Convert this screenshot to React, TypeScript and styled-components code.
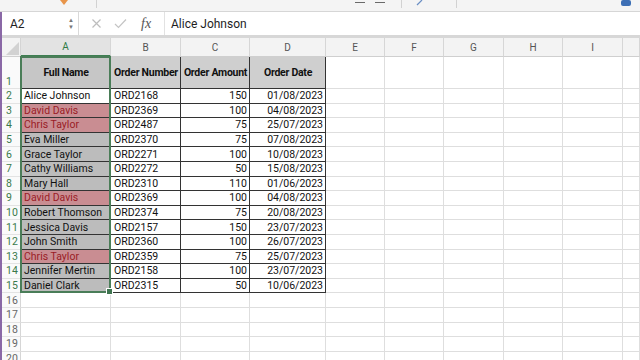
import React from 'react';
import styled, { createGlobalStyle } from 'styled-components';

const GlobalStyle = createGlobalStyle`
  html, body {
    margin: 0;
    padding: 0;
    background: #ffffff;
    overflow: hidden;
  }
  body {
    font-family: Roboto, "Liberation Sans", sans-serif;
  }
`;

const Page = styled.div`
  width: 640px;
  height: 360px;
  overflow: hidden;
  display: flex;
  flex-direction: column;
`;

const Ribbon = styled.div`
  height: 12px;
  flex: none;
  background: #f4f4f4;
  border-bottom: 1px solid #d6d6d6;
  display: flex;
  align-items: flex-start;
  box-sizing: border-box;
  overflow: hidden;
`;

const RibbonGap = styled.div<{ $w: number }>`
  width: ${p => p.$w}px;
  flex: none;
`;

const RibbonSep = styled.div`
  width: 1px;
  height: 8px;
  background: #d2d2d2;
  flex: none;
`;

const Dash = styled.div`
  width: 10px;
  height: 1px;
  margin-top: 2px;
  background: #6a6a6a;
  flex: none;
`;

const Body = styled.div`
  flex: 1;
  display: flex;
  flex-direction: column;
  border-left: 2px solid #8a68a6;
  min-height: 0;
`;

const FormulaBar = styled.div`
  height: 23px;
  flex: none;
  display: flex;
  align-items: center;
  background: #ffffff;
  border-bottom: 3px solid #d7d7d7;
  box-sizing: content-box;
`;

const NameBox = styled.div`
  width: 77px;
  height: 100%;
  box-sizing: border-box;
  display: flex;
  align-items: center;
  justify-content: space-between;
  padding: 0 4px 0 8px;
  border-right: 1px solid #d9d9d9;
  font-size: 12px;
  color: #222;
`;

const Spinner = styled.div`
  display: flex;
  flex-direction: column;
  gap: 1px;
  font-size: 6px;
  line-height: 6px;
  color: #777;
`;

const FxArea = styled.div`
  width: 86px;
  height: 100%;
  display: flex;
  align-items: center;
  gap: 12px;
  padding-left: 12px;
  box-sizing: border-box;
  border-right: 1px solid #e2e2e2;
`;

const FxText = styled.span`
  font-family: "Liberation Serif", serif;
  font-style: italic;
  font-size: 14px;
  color: #555;
  margin-left: 2px;
`;

const FormulaText = styled.div`
  padding-left: 6px;
  font-size: 12px;
  color: #1e1e1e;
`;

const Sheet = styled.div`
  position: relative;
  display: grid;
  grid-template-columns: 19px 90px 70px 69px 76px 59px 59px 60px 59px 60px 1fr;
  grid-template-rows: 19px 32px repeat(19, 14.6px);
  background: #fff;
`;

const Corner = styled.div`
  background: #f3f3f3;
  border-right: 1px solid #d4d4d4;
  border-bottom: 1px solid #cfcfcf;
  box-sizing: border-box;
  overflow: hidden;
`;

const ColHead = styled.div<{ $active?: boolean }>`
  box-sizing: border-box;
  display: flex;
  align-items: center;
  justify-content: center;
  font-size: 10px;
  color: ${p => (p.$active ? '#2f7a45' : '#555')};
  background: ${p => (p.$active ? '#e3e3e3' : '#f3f3f3')};
  border-right: 1px solid #d6d6d6;
  border-bottom: ${p => (p.$active ? '2px solid #3f7f52' : '1px solid #cfcfcf')};
`;

const RowHead = styled.div<{ $active?: boolean; $bottom?: boolean }>`
  box-sizing: border-box;
  display: flex;
  align-items: ${p => (p.$bottom ? 'flex-end' : 'center')};
  padding-left: 4px;
  font-size: 10.5px;
  color: ${p => (p.$active ? '#3a7a4c' : '#666')};
  background: #fafafa;
  border-right: 1px solid #d6d6d6;
  border-bottom: 1px solid #e3e3e3;
`;

const Cell = styled.div<{
  $fill?: string;
  $dark?: boolean;
  $bold?: boolean;
  $align?: 'left' | 'right' | 'center';
  $color?: string;
}>`
  box-sizing: border-box;
  display: flex;
  align-items: center;
  justify-content: ${p =>
    p.$align === 'right' ? 'flex-end' : p.$align === 'center' ? 'center' : 'flex-start'};
  padding: 0 2px 0 3px;
  font-size: 10.5px;
  font-weight: ${p => (p.$bold ? 700 : 400)};
  letter-spacing: ${p => (p.$bold ? '-0.25px' : '0')};
  color: ${p => p.$color || '#111'};
  background: ${p => p.$fill || '#ffffff'};
  border-right: 1px solid ${p => (p.$dark ? '#333' : '#dedede')};
  border-bottom: 1px solid ${p => (p.$dark ? '#333' : '#dedede')};
  white-space: nowrap;
  overflow: hidden;
`;

const Selection = styled.div`
  position: absolute;
  left: 18px;
  top: 18px;
  width: 91px;
  height: 237px;
  border: 2px solid #4a7d58;
  box-sizing: border-box;
  pointer-events: none;
`;

const Handle = styled.div`
  position: absolute;
  right: -4px;
  bottom: -4px;
  width: 5px;
  height: 5px;
  background: #3f7450;
  border: 1px solid #fff;
`;

type Order = { name: string; num: string; amt: number; date: string; dup?: boolean };

const orders: Order[] = [
  { name: 'Alice Johnson', num: 'ORD2168', amt: 150, date: '01/08/2023' },
  { name: 'David Davis', num: 'ORD2369', amt: 100, date: '04/08/2023', dup: true },
  { name: 'Chris Taylor', num: 'ORD2487', amt: 75, date: '25/07/2023', dup: true },
  { name: 'Eva Miller', num: 'ORD2370', amt: 75, date: '07/08/2023' },
  { name: 'Grace Taylor', num: 'ORD2271', amt: 100, date: '10/08/2023' },
  { name: 'Cathy Williams', num: 'ORD2272', amt: 50, date: '15/08/2023' },
  { name: 'Mary Hall', num: 'ORD2310', amt: 110, date: '01/06/2023' },
  { name: 'David Davis', num: 'ORD2369', amt: 100, date: '04/08/2023', dup: true },
  { name: 'Robert Thomson', num: 'ORD2374', amt: 75, date: '20/08/2023' },
  { name: 'Jessica Davis', num: 'ORD2157', amt: 150, date: '23/07/2023' },
  { name: 'John Smith', num: 'ORD2360', amt: 100, date: '26/07/2023' },
  { name: 'Chris Taylor', num: 'ORD2359', amt: 75, date: '25/07/2023', dup: true },
  { name: 'Jennifer Mertin', num: 'ORD2158', amt: 100, date: '23/07/2023' },
  { name: 'Daniel Clark', num: 'ORD2315', amt: 50, date: '10/06/2023' },
];

const columns = ['A', 'B', 'C', 'D', 'E', 'F', 'G', 'H', 'I', ''];
const emptyCols = 6;

function nameCell(o: Order, i: number) {
  if (i === 0) return <Cell key="a" $dark>{o.name}</Cell>;
  if (o.dup)
    return (
      <Cell key="a" $dark $fill="#c98d92" $color="#9a1c26">
        {o.name}
      </Cell>
    );
  return (
    <Cell key="a" $dark $fill="#bcbcbc">
      {o.name}
    </Cell>
  );
}

export default function App() {
  return (
    <Page>
      <GlobalStyle />
      <Ribbon>
        <RibbonGap $w={60} />
        <svg width="8" height="6" viewBox="0 0 8 6">
          <path d="M0 0 L8 0 L4 5 Z" fill="#e8954a" />
        </svg>
        <RibbonGap $w={28} />
        <RibbonSep />
        <RibbonGap $w={258} />
        <Dash />
        <RibbonGap $w={10} />
        <Dash />
        <RibbonGap $w={16} />
        <RibbonSep />
        <RibbonGap $w={14} />
        <svg width="8" height="6" viewBox="0 0 8 6">
          <path d="M1 5 L6 0" stroke="#6b8fc4" strokeWidth="1.2" />
        </svg>
        <RibbonGap $w={32} />
        <RibbonSep />
        <RibbonGap $w={164} />
        <svg width="10" height="8" viewBox="0 0 10 8">
          <rect x="0" y="0" width="10" height="6" rx="2" fill="#3d6fb5" />
        </svg>
      </Ribbon>
      <Body>
        <FormulaBar>
          <NameBox>
            <span>A2</span>
            <Spinner>
              <span>▲</span>
              <span>▼</span>
            </Spinner>
          </NameBox>
          <FxArea>
            <svg width="11" height="11" viewBox="0 0 11 11">
              <path d="M1.5 1.5 L9.5 9.5 M9.5 1.5 L1.5 9.5" stroke="#bdbdbd" strokeWidth="1.2" />
            </svg>
            <svg width="13" height="11" viewBox="0 0 13 11">
              <path d="M1 6 L4.5 9.5 L12 1.5" stroke="#c4c4c4" strokeWidth="1.2" fill="none" />
            </svg>
            <FxText>fx</FxText>
          </FxArea>
          <FormulaText>Alice Johnson</FormulaText>
        </FormulaBar>
        <Sheet>
          <Corner>
            <svg width="19" height="19" viewBox="0 0 19 19">
              <path d="M17 4 L17 17 L4 17 Z" fill="#d2d2d2" />
            </svg>
          </Corner>
          {columns.map((c, i) => (
            <ColHead key={'h' + i} $active={c === 'A'}>
              {c}
            </ColHead>
          ))}

          <RowHead $active $bottom>1</RowHead>
          <Cell $dark $bold $align="center" $fill="#c6c6c6">Full Name</Cell>
          <Cell $dark $bold $align="center" $fill="#cfcfcf">Order Number</Cell>
          <Cell $dark $bold $align="center" $fill="#cfcfcf">Order Amount</Cell>
          <Cell $dark $bold $align="center" $fill="#cfcfcf">Order Date</Cell>
          {Array.from({ length: emptyCols }).map((_, k) => (
            <Cell key={'e1' + k} />
          ))}

          {orders.map((o, i) => (
            <React.Fragment key={'r' + i}>
              <RowHead $active>{i + 2}</RowHead>
              {nameCell(o, i)}
              <Cell $dark>{o.num}</Cell>
              <Cell $dark $align="right">{o.amt}</Cell>
              <Cell $dark $align="right">{o.date}</Cell>
              {Array.from({ length: emptyCols }).map((_, k) => (
                <Cell key={'e' + k} />
              ))}
            </React.Fragment>
          ))}

          {[16, 17, 18, 19, 20].map(n => (
            <React.Fragment key={'x' + n}>
              <RowHead>{n}</RowHead>
              {Array.from({ length: 10 }).map((_, k) => (
                <Cell key={'f' + k} />
              ))}
            </React.Fragment>
          ))}

          <Selection>
            <Handle />
          </Selection>
        </Sheet>
      </Body>
    </Page>
  );
}
